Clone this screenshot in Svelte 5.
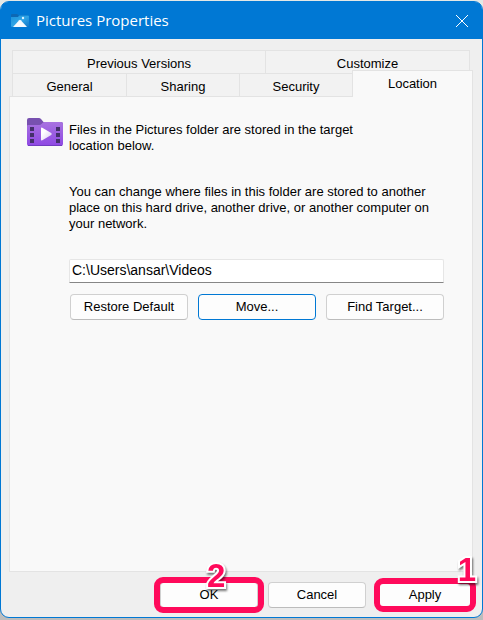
<script lang="ts">
  let activeTab = $state('Location')
  let path = $state('C:\\Users\\ansar\\Videos')

  const BACK_TABS = ['Previous Versions', 'Customize']
  const FRONT_TABS = ['General', 'Sharing', 'Security', 'Location']
</script>

{#snippet tab(name: string)}
  <button
    class="tab"
    class:active={activeTab === name}
    role="tab"
    aria-selected={activeTab === name}
    onclick={() => (activeTab = name)}
  >
    {name}
  </button>
{/snippet}

<div class="dialog" role="dialog" aria-labelledby="title">
  <header class="titlebar">
    <svg class="app-icon" viewBox="0 0 18 14" aria-hidden="true">
      <defs>
        <linearGradient id="sky" x1="0" y1="0" x2="1" y2="1">
          <stop offset="0" stop-color="#1c93dc" />
          <stop offset="0.500" stop-color="#2fa4e6" />
          <stop offset="1" stop-color="#1277c8" />
        </linearGradient>
      </defs>
      <path d="M0 1q0-1 1-1h5l2 1.500h9q1 0 1 1V12q0 1-1 1H1q-1 0-1-1z" fill="#0d68b4" />
      <path d="M0 3h7l1-1.500h9q1 0 1 1V12q0 1-1 1H1q-1 0-1-1z" fill="url(#sky)" />
      <path d="M2 13 8.200 6.200q.8-.8 1.600 0L16 13z" fill="#f4faff" />
      <circle cx="12" cy="4" r="1.200" fill="#d9f2ff" />
    </svg>
    <h1 id="title">Pictures Properties</h1>
    <button class="close" aria-label="Close">
      <svg viewBox="0 0 12 12" aria-hidden="true">
        <path d="M0 0 12 12M12 0 0 12" />
      </svg>
    </button>
  </header>

  <main>
    <div class="tabs" role="tablist">
      <div class="tab-row back">
        {#each BACK_TABS as name}
          {@render tab(name)}
        {/each}
      </div>
      <div class="tab-row front">
        {#each FRONT_TABS as name}
          {@render tab(name)}
        {/each}
      </div>
    </div>

    <section class="page" role="tabpanel" aria-label="Location">
      <svg class="folder" viewBox="0 0 36 28" aria-hidden="true">
        <defs>
          <linearGradient id="violet" x1="0" y1="0" x2="0" y2="1">
            <stop offset="0" stop-color="#a873e0" />
            <stop offset="1" stop-color="#8f48e4" />
          </linearGradient>
          <linearGradient id="play" x1="0" y1="0" x2="1" y2="1">
            <stop offset="0.300" stop-color="#ffffff" />
            <stop offset="1" stop-color="#d9c8f2" />
          </linearGradient>
        </defs>
        <path d="M0 2q0-2 2-2h10q1 0 2 1l2.500 3H34q2 0 2 2v4H0z" fill="#7851b0" />
        <path d="M0 8q0-1 1-1h11.500q1 0 2-1l1-1q1-1 2-1H34q2 0 2 2v20q0 2-2 2H2q-2 0-2-2z" fill="url(#violet)" />
        <path d="M1 27.500h34" stroke="#713cc0" />
        <path
          d="M3 9h4v4H3zM3 15h4v4H3zM3 21h4v4H3zM29 9h4v4h-4zM29 15h4v4h-4zM29 21h4v4h-4z"
          fill="#44306b"
        />
        <path d="M14 10.500q0-1.500 1.300-.8l8.900 5.400q1.200.9 0 1.800l-8.900 5.400q-1.300.7-1.300-.8z" fill="url(#play)" />
      </svg>

      <div class="content">
        <p class="intro">Files in the Pictures folder are stored in the target location below.</p>
        <p>
          You can change where files in this folder are stored to another place on this hard drive,
          another drive, or another computer on your network.
        </p>
        <input type="text" aria-label="Target location" bind:value={path} />
        <div class="actions">
          <button class="btn">Restore Default</button>
          <button class="btn default">Move...</button>
          <button class="btn">Find Target...</button>
        </div>
      </div>
    </section>
  </main>

  <footer>
    <div class="step second">
      <button class="btn">OK</button>
      <span class="number">2</span>
    </div>
    <button class="btn">Cancel</button>
    <div class="step first">
      <button class="btn">Apply</button>
      <span class="number">1</span>
    </div>
  </footer>
</div>

<style>
  :global(body) {
    background: #c6c6c6;
  }

  :global(#app) {
    display: flow-root;
    background: linear-gradient(#e4e8e6 40px, #bdbdbd 80px);
  }

  .dialog {
    box-sizing: border-box;
    margin: 1px 0 2px;
    border: 1px solid #0078d4;
    border-radius: 9px;
    background: #efefef;
    color: #000;
    font: 13px/16px 'Liberation Sans', Arial, sans-serif;
  }

  button,
  input {
    box-sizing: border-box;
    margin: 0;
    color: inherit;
    font: inherit;
  }

  .titlebar {
    display: flex;
    align-items: center;
    height: 37px;
    padding: 0 14px 0 10px;
    border-radius: 7px 7px 0 0;
    background: #0078d4;
    color: #fff;
  }

  .app-icon {
    width: 18px;
    height: 14px;
  }

  h1 {
    flex: 1;
    margin: 0 0 2px 7px;
    font: 15px/20px 'Open Sans', 'Segoe UI', sans-serif;
  }

  .close {
    display: flex;
    padding: 0;
    border: none;
    background: none;
  }

  .close svg {
    width: 12px;
    height: 12px;
    overflow: visible;
    fill: none;
    stroke: #fff;
  }

  main {
    padding: 11px 9px 0 8px;
  }

  .tabs {
    padding: 0 0 0 3px;
  }

  .tab-row {
    display: grid;
  }

  .back {
    grid-template-columns: 253fr 205fr;
    padding-right: 3px;
  }

  .front {
    grid-template-columns: 114fr 113fr 113fr 121fr;
    align-items: end;
  }

  .tab {
    height: 23px;
    padding: 4px 0 0;
    border: 1px solid #e3e3e3;
    border-width: 1px 0 0 1px;
    background: #f2f2f2;
    text-align: center;
  }

  .back .tab:last-child {
    border-right-width: 1px;
  }

  .tab.active {
    z-index: 1;
    height: 27px;
    margin: -4px 0 -1px;
    padding: 0;
    border-right-width: 1px;
    background: #f9f9f9;
  }

  .page {
    display: flex;
    align-items: flex-start;
    gap: 6px;
    min-height: 476px;
    box-sizing: border-box;
    padding: 21px 28px 20px 17px;
    border: 1px solid #e3e3e3;
    background: #f9f9f9;
  }

  .folder {
    flex: none;
    width: 36px;
    height: 28px;
  }

  .content {
    flex: 1;
    padding-top: 4px;
  }

  p {
    max-width: 376px;
    margin: 0 0 27px;
  }

  .intro {
    max-width: 300px;
    margin-bottom: 30px;
  }

  input {
    display: block;
    width: 100%;
    height: 24px;
    padding: 0 2px 2px;
    border: 1px solid #e6e6e6;
    border-bottom-color: #868686;
    border-radius: 2px 2px 0 0;
    outline: none;
    background: #fff;
    font-size: 14px;
  }

  .actions {
    display: grid;
    grid-template-columns: repeat(3, 1fr);
    gap: 10px;
    padding: 11px 0 0 1px;
  }

  .btn {
    height: 26px;
    padding: 0;
    border: 1px solid #d0d0d0;
    border-bottom-color: #bcbcbc;
    border-radius: 4px;
    background: #fdfdfd;
  }

  .btn.default {
    border-color: #0078d4;
  }

  footer {
    display: flex;
    justify-content: flex-end;
    gap: 10px;
    padding: 10px 8px 9px;
  }

  footer .btn {
    width: 98px;
  }

  .step {
    position: relative;
  }

  /* pink frame drawn round the button */
  .step::after {
    content: '';
    position: absolute;
    border: 6px solid #ff0a5b;
    border-radius: 9px;
    pointer-events: none;
  }

  .second::after {
    inset: -5px -6px;
  }

  .first::after {
    inset: -4px -2px;
  }

  .number {
    position: absolute;
    z-index: 1;
    color: #ff0a5b;
    font: bold 33px/36px 'Liberation Sans', Arial, sans-serif;
    paint-order: stroke fill;
    -webkit-text-stroke: 4px #fff;
    filter: drop-shadow(1px 2px 1px #0008);
    pointer-events: none;
  }

  .second .number {
    top: -24px;
    left: 47px;
  }

  .first .number {
    top: -30px;
    right: -2px;
  }
</style>
